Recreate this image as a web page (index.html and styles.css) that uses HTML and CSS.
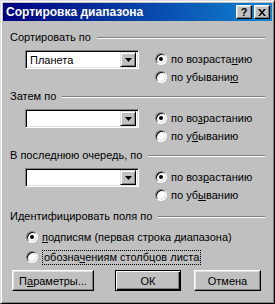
FILE: index.html
```html
<!DOCTYPE html>
<html lang="ru">
<head>
    <meta charset="UTF-8">
    <title>Сортировка диапазона</title>
    <link rel="stylesheet" href="styles.css">
</head>
<body>
    <div class="window">
        <!-- Title bar -->
        <div class="titlebar">
            <span class="title">Сортировка диапазона</span>
            <div class="title-buttons">
                <span class="tbtn help">?</span>
                <span class="tbtn">
                    <svg width="8" height="7" viewBox="0 0 8 7"><path d="M0 0h2l2 2.5L6 0h2L5 3.5 8 7H6L4 4.5 2 7H0l3-3.5z" fill="#000"/></svg>
                </span>
            </div>
        </div>

        <div class="content">
            <!-- Sort by -->
            <div class="group">
                <div class="group-head"><span>Сортировать по</span><span class="rule"></span></div>
                <div class="group-body">
                    <div class="combo">
                        <span class="combo-text">Планета</span>
                        <span class="combo-btn"><svg width="7" height="4" viewBox="0 0 7 4"><polygon points="0,0 7,0 3.5,4" fill="#000"/></svg></span>
                    </div>
                    <div class="radios">
                        <div class="radio checked"><span class="radio-box"></span><span>по возраста<u>н</u>ию</span></div>
                        <div class="radio"><span class="radio-box"></span><span>по убывани<u>ю</u></span></div>
                    </div>
                </div>
            </div>

            <!-- Then by -->
            <div class="group">
                <div class="group-head"><span>Затем по</span><span class="rule"></span></div>
                <div class="group-body">
                    <div class="combo">
                        <span class="combo-text"></span>
                        <span class="combo-btn"><svg width="7" height="4" viewBox="0 0 7 4"><polygon points="0,0 7,0 3.5,4" fill="#000"/></svg></span>
                    </div>
                    <div class="radios">
                        <div class="radio checked"><span class="radio-box"></span><span>по во<u>з</u>растанию</span></div>
                        <div class="radio"><span class="radio-box"></span><span>по у<u>б</u>ыванию</span></div>
                    </div>
                </div>
            </div>

            <!-- Last by -->
            <div class="group">
                <div class="group-head"><span>В последнюю очередь, по</span><span class="rule"></span></div>
                <div class="group-body">
                    <div class="combo">
                        <span class="combo-text"></span>
                        <span class="combo-btn"><svg width="7" height="4" viewBox="0 0 7 4"><polygon points="0,0 7,0 3.5,4" fill="#000"/></svg></span>
                    </div>
                    <div class="radios">
                        <div class="radio checked"><span class="radio-box"></span><span>по воз<u>р</u>астанию</span></div>
                        <div class="radio"><span class="radio-box"></span><span>по уб<u>ы</u>ванию</span></div>
                    </div>
                </div>
            </div>

            <!-- Identify fields -->
            <div class="group ident-group">
                <div class="group-head"><span>Идентифицировать поля по</span><span class="rule"></span></div>
                <div class="ident">
                    <div class="radio checked"><span class="radio-box"></span><span><u>п</u>одписям (первая строка диапазона)</span></div>
                    <div class="radio"><span class="radio-box"></span><span class="focus">обозна<u>ч</u>ениям столбцов листа</span></div>
                </div>
            </div>

            <div class="buttons">
                <button class="btn btn-params">П<u>а</u>раметры...</button>
                <button class="btn btn-ok">ОК</button>
                <button class="btn btn-cancel">Отмена</button>
            </div>
        </div>
    </div>
</body>
</html>
```

FILE: styles.css
```css
body {
    margin: 0;
    background-color: #c0c0c0;
}

.window {
    width: 275px;
    height: 304px;
    box-sizing: border-box;
    background-color: #c0c0c0;
    border: 1px solid;
    border-color: #dfdfdf #000 #000 #dfdfdf;
    box-shadow: inset 1px 1px #fff, inset -1px -1px #808080;
    padding: 2px;
    display: flex;
    flex-direction: column;
    font-family: "Liberation Sans", Arial, sans-serif;
    font-size: 11px;
    color: #000;
}

/* Title bar */
.titlebar {
    height: 18px;
    flex-shrink: 0;
    background: linear-gradient(to right, #000080, #1084d0);
    display: flex;
    align-items: center;
    justify-content: space-between;
    padding: 0 2px 0 3px;
}

.title {
    color: #fff;
    font-weight: bold;
    font-size: 12px;
}

.title-buttons {
    display: flex;
    gap: 2px;
}

.tbtn {
    width: 16px;
    height: 14px;
    box-sizing: border-box;
    background-color: #c0c0c0;
    border: 1px solid;
    border-color: #fff #000 #000 #fff;
    box-shadow: inset -1px -1px #808080, inset 1px 1px #dfdfdf;
    display: flex;
    align-items: center;
    justify-content: center;
}

.tbtn.help {
    font-weight: bold;
    font-size: 11px;
    line-height: 12px;
}

/* Content */
.content {
    flex: 1;
    display: flex;
    flex-direction: column;
    padding: 10px 7px 10px 7px;
}

.group + .group {
    margin-top: 4px;
}

.group.ident-group {
    margin-top: 6px;
}

.group-head {
    display: flex;
    align-items: center;
    height: 13px;
    line-height: 13px;
}

.rule {
    flex: 1;
    margin-left: 6px;
    border-top: 1px solid #808080;
    border-bottom: 1px solid #fff;
}

.group-body {
    display: flex;
    align-items: flex-start;
    margin-top: 6px;
    padding-left: 15px;
}

/* Combo box */
.combo {
    width: 114px;
    height: 19px;
    box-sizing: border-box;
    margin-right: 16px;
    background-color: #fff;
    border: 1px solid;
    border-color: #808080 #fff #fff #808080;
    box-shadow: inset 1px 1px #000, inset -1px -1px #dfdfdf;
    display: flex;
    align-items: center;
    padding: 2px;
}

.combo-text {
    flex: 1;
    padding-left: 2px;
}

.combo-btn {
    width: 16px;
    height: 15px;
    box-sizing: border-box;
    background-color: #c0c0c0;
    border: 1px solid;
    border-color: #dfdfdf #000 #000 #dfdfdf;
    box-shadow: inset 1px 1px #fff, inset -1px -1px #808080;
    display: flex;
    align-items: center;
    justify-content: center;
}

/* Radio buttons */
.radios {
    display: flex;
    flex-direction: column;
}

.radio {
    display: flex;
    align-items: center;
    height: 18px;
    gap: 4px;
}

.radio-box {
    width: 12px;
    height: 12px;
    flex-shrink: 0;
    box-sizing: border-box;
    border-radius: 50%;
    background-color: #fff;
    border: 1px solid;
    border-color: #808080 #fff #fff #808080;
    box-shadow: inset 1px 1px #000, inset -1px -1px #dfdfdf;
    display: flex;
    align-items: center;
    justify-content: center;
}

.radio.checked .radio-box::after {
    content: "";
    width: 4px;
    height: 4px;
    border-radius: 50%;
    background-color: #000;
}

.ident {
    margin-top: 5px;
    padding-left: 16px;
    display: flex;
    flex-direction: column;
    gap: 2px;
}

.focus {
    border: 1px dotted #000;
    padding: 0 1px;
    line-height: 13px;
}

/* Push buttons */
.buttons {
    margin-top: auto;
    display: flex;
    padding-left: 2px;
}

.btn {
    height: 21px;
    box-sizing: border-box;
    padding: 0;
    font-family: inherit;
    font-size: 11px;
    color: #000;
    background-color: #c0c0c0;
    border: 1px solid;
    border-color: #fff #000 #000 #fff;
    box-shadow: inset -1px -1px #808080, inset 1px 1px #dfdfdf;
}

.btn-params {
    width: 82px;
}

.btn-ok {
    width: 66px;
    margin-left: 21px;
    border: 1px solid #000;
    box-shadow: inset 1px 1px #fff, inset -1px -1px #000, inset -2px -2px #808080;
}

.btn-cancel {
    width: 67px;
    margin-left: 13px;
}
```
